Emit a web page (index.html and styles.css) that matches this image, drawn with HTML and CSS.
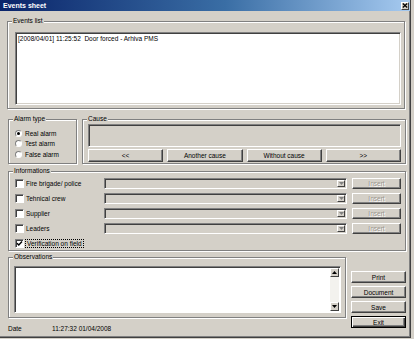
FILE: index.html
```html
<!DOCTYPE html>
<html lang="en">
<head>
  <meta charset="UTF-8" />
  <title>Events sheet</title>
  <link rel="stylesheet" href="styles.css">
</head>
<body>
  <div class="window">
    <div class="titlebar">
      <span class="title">Events sheet</span>
      <span class="close-btn">
        <svg width="6" height="5" viewBox="0 0 6 5"><path d="M0.8 0.5 L5.2 4.5 M5.2 0.5 L0.8 4.5" stroke="#000" stroke-width="1.3"/></svg>
      </span>
    </div>

    <div class="dialog">
      <div class="group events-box">
        <span class="group-title">Events list</span>
        <div class="sunken listbox">
          <div class="list-item">[2008/04/01] 11:25:52  Door forced - Arhiva PMS</div>
        </div>
      </div>

      <div class="mid-row">
        <div class="group alarm-box">
          <span class="group-title">Alarm type</span>
          <div class="radio-row"><span class="radio"><span class="dot"></span></span>Real alarm</div>
          <div class="radio-row"><span class="radio"></span>Test alarm</div>
          <div class="radio-row"><span class="radio"></span>False alarm</div>
        </div>
        <div class="group cause-box">
          <span class="group-title">Cause</span>
          <div class="sunken cause-field"></div>
          <div class="cause-buttons">
            <div class="btn">&lt;&lt;</div>
            <div class="btn">Another cause</div>
            <div class="btn">Without cause</div>
            <div class="btn">&gt;&gt;</div>
          </div>
        </div>
      </div>

      <div class="group info-box">
        <span class="group-title">Informations</span>
        <div class="info-row">
          <label class="check-label"><span class="checkbox"></span>Fire brigade/ police</label>
          <div class="combo"><span class="combo-arrow"><svg width="5" height="3" viewBox="0 0 5 3"><path d="M0 0 H5 L2.5 3 Z" fill="#808080"/></svg></span></div>
          <div class="btn disabled insert">Insert</div>
        </div>
        <div class="info-row">
          <label class="check-label"><span class="checkbox"></span>Tehnical crew</label>
          <div class="combo"><span class="combo-arrow"><svg width="5" height="3" viewBox="0 0 5 3"><path d="M0 0 H5 L2.5 3 Z" fill="#808080"/></svg></span></div>
          <div class="btn disabled insert">Insert</div>
        </div>
        <div class="info-row">
          <label class="check-label"><span class="checkbox"></span>Supplier</label>
          <div class="combo"><span class="combo-arrow"><svg width="5" height="3" viewBox="0 0 5 3"><path d="M0 0 H5 L2.5 3 Z" fill="#808080"/></svg></span></div>
          <div class="btn disabled insert">Insert</div>
        </div>
        <div class="info-row">
          <label class="check-label"><span class="checkbox"></span>Leaders</label>
          <div class="combo"><span class="combo-arrow"><svg width="5" height="3" viewBox="0 0 5 3"><path d="M0 0 H5 L2.5 3 Z" fill="#808080"/></svg></span></div>
          <div class="btn disabled insert">Insert</div>
        </div>
        <div class="info-row">
          <label class="check-label"><span class="checkbox"><svg width="7" height="7" viewBox="0 0 7 7"><path d="M1 3.2 L2.8 5 L6 1.6" fill="none" stroke="#000" stroke-width="1.4"/></svg></span><span class="focused">Verification on field</span></label>
        </div>
      </div>

      <div class="bottom">
        <div class="left-col">
          <div class="group obs-box">
            <span class="group-title">Observations</span>
            <div class="obs-field">
              <div class="scrollbar">
                <span class="scroll-btn"><svg width="5" height="3" viewBox="0 0 5 3"><path d="M0 3 H5 L2.5 0 Z" fill="#000"/></svg></span>
                <span class="scroll-track"></span>
                <span class="scroll-btn"><svg width="5" height="3" viewBox="0 0 5 3"><path d="M0 0 H5 L2.5 3 Z" fill="#000"/></svg></span>
              </div>
            </div>
          </div>
          <div class="date-row">
            <span class="date-label">Date</span>
            <span>11:27:32 01/04/2008</span>
          </div>
        </div>
        <div class="side-buttons">
          <div class="btn">Print</div>
          <div class="btn">Document</div>
          <div class="btn">Save</div>
          <div class="btn default">Exit</div>
        </div>
      </div>
    </div>
  </div>
</body>
</html>
```

FILE: styles.css
```css
* { box-sizing: border-box; }

body {
  margin: 0;
  background: #d4d0c8;
  font-family: "Liberation Sans", Arial, sans-serif;
  font-size: 6.5px;
  color: #000;
}

.window {
  width: 411px;
  height: 338px;
  background: #d4d0c8;
  border-right: 1px solid #404040;
  border-bottom: 1px solid #404040;
  box-shadow: inset -1px -1px 0 #808080;
}

.titlebar {
  height: 11px;
  display: flex;
  align-items: center;
  padding: 0 1px 0 3px;
  background: linear-gradient(to right, #0a246a, #3a6ea5 55%, #a6caf0);
}
.title {
  color: #fff;
  font-weight: bold;
  font-size: 7px;
}
.close-btn {
  margin-left: auto;
  width: 8px;
  height: 8px;
  display: flex;
  align-items: center;
  justify-content: center;
  background: #d4d0c8;
  border: 1px solid;
  border-color: #fff #404040 #404040 #fff;
}

.dialog { padding: 0 4px 0 7px; }

/* group boxes */
.group {
  position: relative;
  border: 1px solid #808080;
  box-shadow: inset 1px 1px 0 #fff, 1px 1px 0 #fff;
}
.group-title {
  position: absolute;
  top: -5px;
  left: 4px;
  padding: 0 1px;
  line-height: 8px;
  background: #d4d0c8;
}

.sunken {
  border: 1px solid;
  border-color: #808080 #fff #fff #808080;
  box-shadow: inset 1px 1px 0 #404040, inset -1px -1px 0 #d4d0c8;
}

.events-box {
  margin-top: 10px;
  margin-right: 1px;
  height: 88px;
  padding: 10px 3px 0 7px;
}
.listbox {
  height: 73px;
  background: #fff;
  padding: 2px 2px;
}
.list-item {
  white-space: pre;
  line-height: 8px;
}

.mid-row {
  display: flex;
  gap: 5px;
  margin-top: 10px;
  margin-left: 1px;
  height: 45px;
}
.alarm-box {
  width: 69px;
  padding: 8px 0 0 6px;
}
.radio-row {
  display: flex;
  align-items: center;
  gap: 3px;
  height: 10.5px;
}
.radio {
  width: 7px;
  height: 7px;
  border-radius: 50%;
  border: 1px solid;
  border-color: #808080 #fff #fff #808080;
  background: #fff;
  display: flex;
  align-items: center;
  justify-content: center;
}
.dot {
  width: 3px;
  height: 3px;
  border-radius: 50%;
  background: #000;
}

.cause-box {
  flex: 1;
  padding: 4px 4px 0 5px;
  display: flex;
  flex-direction: column;
  gap: 2px;
}
.cause-field {
  height: 23px;
  background: #d4d0c8;
}
.cause-buttons {
  display: grid;
  grid-template-columns: repeat(4, 1fr);
  gap: 4px;
}

/* buttons */
.btn {
  height: 13px;
  display: flex;
  align-items: center;
  justify-content: center;
  background: #d4d0c8;
  border: 1px solid;
  border-color: #fff #404040 #404040 #fff;
  box-shadow: inset -1px -1px 0 #808080;
}
.btn.disabled {
  color: #9a968e;
  text-shadow: 1px 1px 0 #fff;
}
.btn.default {
  border: 1px solid #000;
  box-shadow: inset 1px 1px 0 #fff, inset -1px -1px 0 #404040, inset -2px -2px 0 #808080;
}

/* informations */
.info-box {
  margin-top: 7px;
  margin-left: 1px;
  height: 80px;
  padding: 6px 4px 0 6px;
  display: flex;
  flex-direction: column;
  gap: 4px;
}
.info-row {
  display: flex;
  align-items: center;
  height: 11px;
}
.check-label {
  width: 89px;
  display: flex;
  align-items: center;
  gap: 2px;
}
.checkbox {
  width: 9px;
  height: 9px;
  background: #fff;
  border: 1px solid;
  border-color: #808080 #fff #fff #808080;
  box-shadow: inset 1px 1px 0 #404040;
  display: flex;
  align-items: center;
  justify-content: center;
}
.focused {
  outline: 1px dotted #000;
  padding: 0 1px;
}
.combo {
  width: 243px;
  height: 11px;
  padding: 1px;
  display: flex;
  justify-content: flex-end;
  background: #d4d0c8;
  border: 1px solid;
  border-color: #808080 #fff #fff #808080;
  box-shadow: inset 1px 1px 0 #404040;
}
.combo-arrow {
  width: 8px;
  display: flex;
  align-items: center;
  justify-content: center;
  border: 1px solid;
  border-color: #fff #404040 #404040 #fff;
}
.insert {
  width: 49px;
  height: 11px;
  margin-left: 5px;
}

/* bottom area */
.bottom {
  display: flex;
  gap: 5px;
  margin-top: 6px;
  margin-left: 1px;
}
.left-col { width: 338px; }
.obs-box {
  height: 61px;
  padding: 8px 4px 0 5px;
}
.obs-field {
  height: 47px;
  padding: 1px;
  display: flex;
  justify-content: flex-end;
  background: #fff;
  border: 1px solid;
  border-color: #808080 #fff #fff #808080;
  box-shadow: inset 1px 1px 0 #404040;
}
.scrollbar {
  width: 9px;
  display: flex;
  flex-direction: column;
  background: #f3f2ee;
}
.scroll-btn {
  height: 9px;
  display: flex;
  align-items: center;
  justify-content: center;
  background: #d4d0c8;
  border: 1px solid;
  border-color: #fff #404040 #404040 #fff;
}
.scroll-track { flex: 1; }

.date-row {
  display: flex;
  margin-top: 6px;
  line-height: 10px;
}
.date-label { width: 44px; }

.side-buttons {
  flex: 1;
  padding-top: 14px;
  display: flex;
  flex-direction: column;
  gap: 3px;
}
.side-buttons .btn { height: 12px; }
```
